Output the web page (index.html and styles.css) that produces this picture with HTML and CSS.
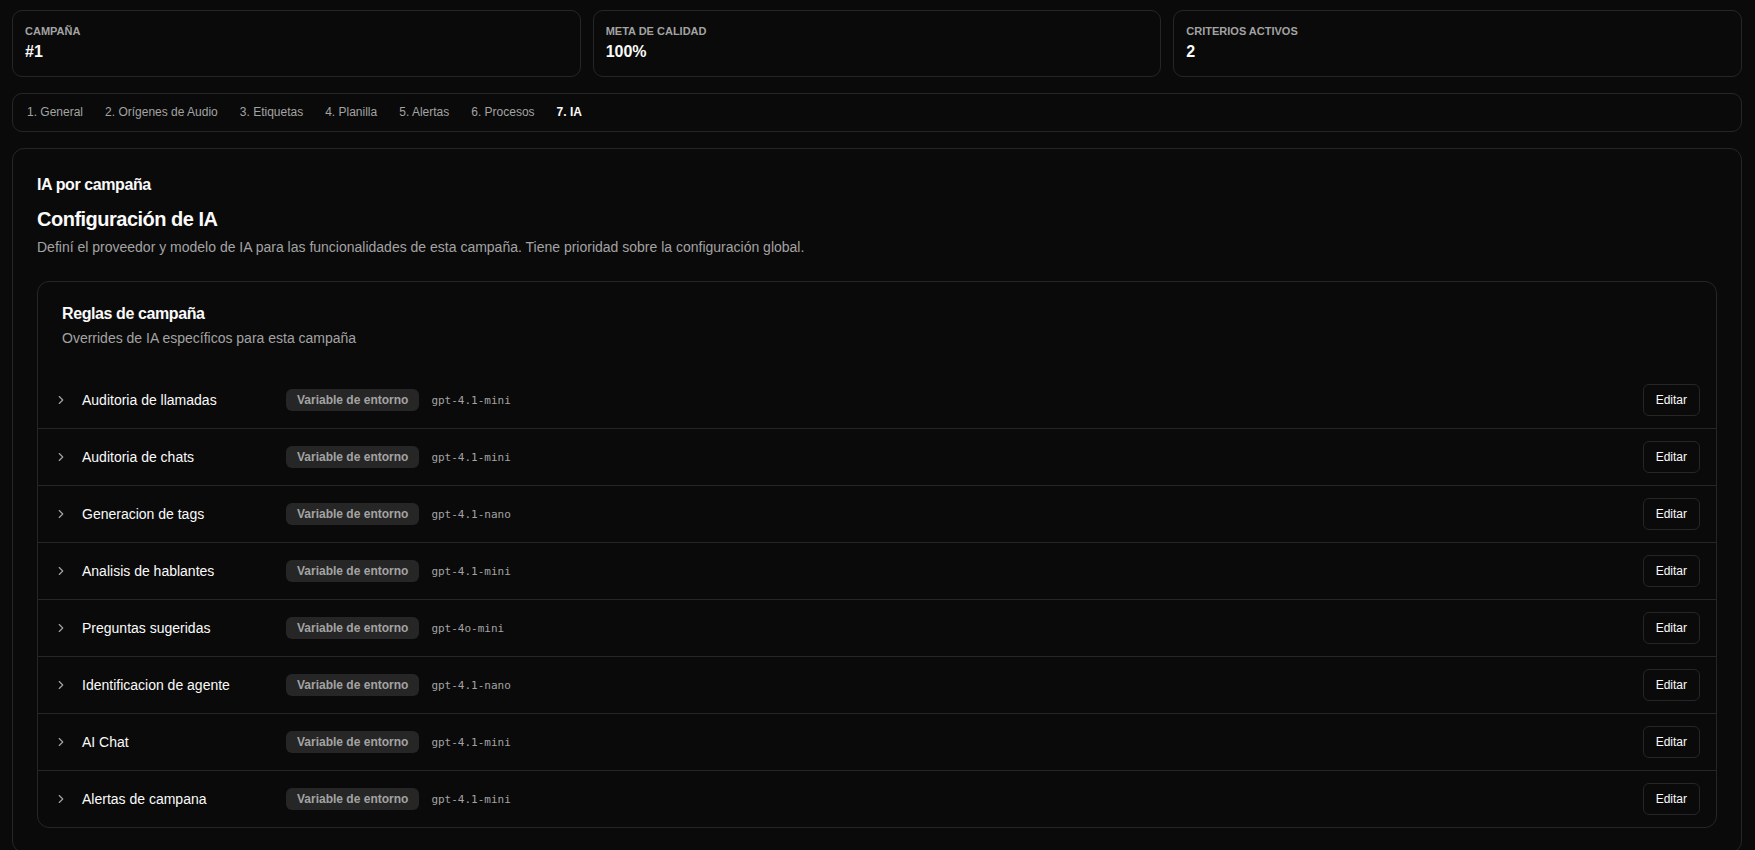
FILE: index.html
```html
<!DOCTYPE html>
<html lang="es">
<head>
    <meta charset="UTF-8">
    <meta name="viewport" content="width=device-width, initial-scale=1.0">
    <title>Campaña #1 - IA</title>
    <link rel="stylesheet" href="styles.css">
</head>
<body>

<main class="page">

    <!-- Resumen de la campaña -->
    <div class="stats">
        <div class="stat">
            <div class="stat-label">Campaña</div>
            <div class="stat-value">#1</div>
        </div>
        <div class="stat">
            <div class="stat-label">Meta de calidad</div>
            <div class="stat-value">100%</div>
        </div>
        <div class="stat">
            <div class="stat-label">Criterios activos</div>
            <div class="stat-value">2</div>
        </div>
    </div>

    <!-- Pasos de configuración -->
    <nav class="tabs">
        <button class="tab">1. General</button>
        <button class="tab">2. Orígenes de Audio</button>
        <button class="tab">3. Etiquetas</button>
        <button class="tab">4. Planilla</button>
        <button class="tab">5. Alertas</button>
        <button class="tab">6. Procesos</button>
        <button class="tab active">7. IA</button>
    </nav>

    <section class="panel">
        <h2 class="panel-title">IA por campaña</h2>
        <h1 class="config-title">Configuración de IA</h1>
        <p class="config-desc">Definí el proveedor y modelo de IA para las funcionalidades de esta campaña. Tiene prioridad sobre la configuración global.</p>

        <div class="rules">
            <div class="rules-head">
                <h3 class="rules-title">Reglas de campaña</h3>
                <p class="rules-sub">Overrides de IA específicos para esta campaña</p>
            </div>

            <ul class="rule-list">
                <li class="rule">
                    <svg class="chev" viewBox="0 0 24 24"><path d="m9 18 6-6-6-6"/></svg>
                    <span class="rule-name">Auditoria de llamadas</span>
                    <span class="badge">Variable de entorno</span>
                    <code class="model">gpt-4.1-mini</code>
                    <button class="edit">Editar</button>
                </li>
                <li class="rule">
                    <svg class="chev" viewBox="0 0 24 24"><path d="m9 18 6-6-6-6"/></svg>
                    <span class="rule-name">Auditoria de chats</span>
                    <span class="badge">Variable de entorno</span>
                    <code class="model">gpt-4.1-mini</code>
                    <button class="edit">Editar</button>
                </li>
                <li class="rule">
                    <svg class="chev" viewBox="0 0 24 24"><path d="m9 18 6-6-6-6"/></svg>
                    <span class="rule-name">Generacion de tags</span>
                    <span class="badge">Variable de entorno</span>
                    <code class="model">gpt-4.1-nano</code>
                    <button class="edit">Editar</button>
                </li>
                <li class="rule">
                    <svg class="chev" viewBox="0 0 24 24"><path d="m9 18 6-6-6-6"/></svg>
                    <span class="rule-name">Analisis de hablantes</span>
                    <span class="badge">Variable de entorno</span>
                    <code class="model">gpt-4.1-mini</code>
                    <button class="edit">Editar</button>
                </li>
                <li class="rule">
                    <svg class="chev" viewBox="0 0 24 24"><path d="m9 18 6-6-6-6"/></svg>
                    <span class="rule-name">Preguntas sugeridas</span>
                    <span class="badge">Variable de entorno</span>
                    <code class="model">gpt-4o-mini</code>
                    <button class="edit">Editar</button>
                </li>
                <li class="rule">
                    <svg class="chev" viewBox="0 0 24 24"><path d="m9 18 6-6-6-6"/></svg>
                    <span class="rule-name">Identificacion de agente</span>
                    <span class="badge">Variable de entorno</span>
                    <code class="model">gpt-4.1-nano</code>
                    <button class="edit">Editar</button>
                </li>
                <li class="rule">
                    <svg class="chev" viewBox="0 0 24 24"><path d="m9 18 6-6-6-6"/></svg>
                    <span class="rule-name">AI Chat</span>
                    <span class="badge">Variable de entorno</span>
                    <code class="model">gpt-4.1-mini</code>
                    <button class="edit">Editar</button>
                </li>
                <li class="rule">
                    <svg class="chev" viewBox="0 0 24 24"><path d="m9 18 6-6-6-6"/></svg>
                    <span class="rule-name">Alertas de campana</span>
                    <span class="badge">Variable de entorno</span>
                    <code class="model">gpt-4.1-mini</code>
                    <button class="edit">Editar</button>
                </li>
            </ul>
        </div>
    </section>

</main>

</body>
</html>
```

FILE: styles.css
```css
/* Generel styling */
body {
    margin: 0;
    background-color: #0a0a0a;
    color: #fafafa;
    font-family: "Liberation Sans", Arial, sans-serif;
}

.page {
    padding: 10px 13px 0 12px;
    display: flex;
    flex-direction: column;
    gap: 16px;
}

/* Resumen */
.stats {
    display: grid;
    grid-template-columns: repeat(3, 1fr);
    gap: 12px;
}

.stat {
    border: 1px solid #262626;
    border-radius: 10px;
    padding: 12px;
}

.stat-label {
    font-size: 11px;
    line-height: 16px;
    font-weight: 600;
    text-transform: uppercase;
    color: #a3a3a3;
}

.stat-value {
    margin-top: 1px;
    font-size: 16px;
    line-height: 24px;
    font-weight: 700;
}

/* Pasos */
.tabs {
    display: flex;
    gap: 2px;
    padding: 4px;
    border: 1px solid #262626;
    border-radius: 10px;
}

.tab {
    background: none;
    border: 0;
    padding: 6px 10px;
    font-family: inherit;
    font-size: 12px;
    line-height: 17px;
    color: #a3a3a3;
    cursor: pointer;
}

.tab.active {
    color: #fafafa;
    font-weight: 700;
}

/* Panel principal */
.panel {
    border: 1px solid #262626;
    border-radius: 12px;
    padding: 24px;
}

.panel-title {
    margin: 0;
    font-size: 16px;
    line-height: 24px;
    font-weight: 700;
    letter-spacing: -0.4px;
}

.config-title {
    margin: 8px 0 0;
    font-size: 20px;
    line-height: 28px;
    font-weight: 700;
    letter-spacing: -0.5px;
}

.config-desc {
    margin: 4px 0 0;
    font-size: 14px;
    line-height: 20px;
    color: #a3a3a3;
}

/* Reglas */
.rules {
    margin-top: 24px;
    border: 1px solid #262626;
    border-radius: 12px;
}

.rules-head {
    padding: 24px;
}

.rules-title {
    margin: 0;
    font-size: 16px;
    line-height: 16px;
    font-weight: 700;
    letter-spacing: -0.4px;
}

.rules-sub {
    margin: 6px 0 0;
    font-size: 14px;
    line-height: 20px;
    color: #a3a3a3;
}

.rule-list {
    list-style: none;
    margin: 0;
    padding: 0;
}

.rule {
    display: flex;
    align-items: center;
    padding: 12px 16px;
    border-top: 1px solid #262626;
}

.rule:first-child {
    border-top: 0;
}

.chev {
    width: 14px;
    height: 14px;
    flex-shrink: 0;
    margin-right: 14px;
    fill: none;
    stroke: #a3a3a3;
    stroke-width: 2;
    stroke-linecap: round;
    stroke-linejoin: round;
}

.rule-name {
    width: 192px;
    margin-right: 12px;
    font-size: 14px;
    line-height: 20px;
}

.badge {
    padding: 2px 10px;
    border: 1px solid transparent;
    border-radius: 6px;
    background-color: #262626;
    color: #a3a3a3;
    font-size: 12px;
    line-height: 16px;
    font-weight: 700;
}

.model {
    margin-left: 12px;
    font-family: "DejaVu Sans Mono", monospace;
    font-size: 11px;
    color: #a3a3a3;
}

.edit {
    margin-left: auto;
    height: 32px;
    padding: 0 12px;
    border: 1px solid #262626;
    border-radius: 6px;
    background-color: #0a0a0a;
    color: #fafafa;
    font-family: inherit;
    font-size: 12px;
    font-weight: 500;
    cursor: pointer;
}
```
